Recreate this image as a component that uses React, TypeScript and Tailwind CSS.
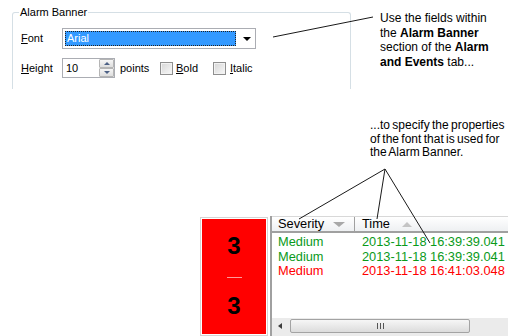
export default function App() {
  return (
    <div className="relative w-[530px] h-[336px] overflow-hidden bg-white text-black font-['Liberation_Sans',Arial,sans-serif]">
      {/* Dialog group box + first note */}
      <div className="flex h-[89px]">
        <fieldset className="ml-[12px] mt-[6px] w-[339px] h-[83px] shrink-0 rounded-t-[3px] border border-b-0 border-[#d5dfe5] px-[6px] text-[11px]">
          <legend className="px-[1px] leading-[13px]">Alarm Banner</legend>

          <div className="mt-[9px] ml-[2px] flex h-[21px] items-center">
            <span className="w-[41px]">
              <span className="underline">F</span>ont
            </span>
            <div className="flex h-[21px] w-[194px] items-center border border-[#abadb3] p-[2px]">
              <div className="h-full w-[171px] border border-dotted border-[#222] bg-[#3399ff] pl-[1px] leading-[13px] text-white">
                Arial
              </div>
              <div className="ml-[7px] h-0 w-0 border-x-[4px] border-t-[4px] border-x-transparent border-t-black" />
            </div>
          </div>

          <div className="mt-[9px] ml-[2px] flex h-[20px] items-center">
            <span className="w-[41px]">
              <span className="underline">H</span>eight
            </span>
            <div className="flex h-[20px] w-[53px] border border-[#abadb3]">
              <span className="w-[36px] pl-[3px] leading-[18px]">10</span>
              <div className="flex w-[15px] flex-col">
                <div className="flex h-[9px] items-center justify-center rounded-[1px] border border-[#b5b5b5] bg-gradient-to-b from-[#f6f6f6] to-[#dedede]">
                  <div className="h-0 w-0 border-x-[3px] border-b-[3px] border-x-transparent border-b-[#4d6185]" />
                </div>
                <div className="flex h-[9px] items-center justify-center rounded-[1px] border border-[#b5b5b5] bg-gradient-to-b from-[#f6f6f6] to-[#dedede]">
                  <div className="h-0 w-0 border-x-[3px] border-t-[3px] border-x-transparent border-t-[#4d6185]" />
                </div>
              </div>
            </div>
            <span className="ml-[5px] w-[40px]">points</span>
            <div className="size-[13px] border border-[#8f8f8f] bg-gradient-to-br from-[#d6d6d6] to-[#f8f8f8] shadow-[inset_0_0_0_1px_#f2f2f2]" />
            <span className="ml-[3px] w-[37px]">
              <span className="underline">B</span>old
            </span>
            <div className="size-[13px] border border-[#8f8f8f] bg-gradient-to-br from-[#d6d6d6] to-[#f8f8f8] shadow-[inset_0_0_0_1px_#f2f2f2]" />
            <span className="ml-[4px]">
              <span className="underline">I</span>talic
            </span>
          </div>
        </fieldset>

        <p className="ml-[29px] mt-[11px] text-[12px] leading-[14.67px]">
          Use the fields within
          <br />
          the <b>Alarm Banner</b>
          <br />
          section of the <b>Alarm</b>
          <br />
          <b>and Events</b> tab...
        </p>
      </div>

      {/* Second note */}
      <div className="h-[127px] pl-[370px] pt-[30px] text-[12px] leading-[13.5px] [word-spacing:-1px]">
        ...to specify the properties
        <br />
        of the font that is used for
        <br />
        the Alarm Banner.
      </div>

      {/* Alarm banner preview */}
      <div className="flex h-[120px] pl-[200px]">
        <div className="mt-[1px] h-[119px] w-[68px] border border-[#d4d4d4] p-[1px]">
          <div className="flex h-full flex-col items-center bg-[#ff0000] pt-[15px] text-[24px] font-bold leading-[24px]">
            <span>3</span>
            <div className="mt-[19px] h-[1px] w-[15px] bg-[#ff9a9a]" />
            <span className="mt-[16px]">3</span>
          </div>
        </div>

        <div className="ml-[2px] flex w-[238px] flex-col border-l-2 border-[#a0a0a0] text-[12.8px]">
          <div className="flex h-[17px] items-center border-t border-b-2 border-t-[#d8d8d8] border-b-[#a0a0a0] bg-gradient-to-b from-white to-[#eef0f2]">
            <div className="flex h-full w-[83px] items-center border-r border-[#a0a0a0] pl-[6px]">
              Severity
              <div className="ml-[9px] h-0 w-0 border-x-[6px] border-t-[5px] border-x-transparent border-t-[#a8a8a8]" />
            </div>
            <div className="flex items-center pl-[7px]">
              Time
              <div className="ml-[12px] h-0 w-0 border-x-[5px] border-b-[5px] border-x-transparent border-b-[#c4c4c4]" />
            </div>
          </div>

          <div className="flex-1 whitespace-nowrap pt-[2px] leading-[14.7px]">
            <div className="flex text-[#0a9a1a]">
              <span className="w-[83px] pl-[6px]">Medium</span>
              <span className="pl-[7px]">2013-11-18 16:39:39.041</span>
            </div>
            <div className="flex text-[#0a9a1a]">
              <span className="w-[83px] pl-[6px]">Medium</span>
              <span className="pl-[7px]">2013-11-18 16:39:39.041</span>
            </div>
            <div className="flex text-[#ff0000]">
              <span className="w-[83px] pl-[6px]">Medium</span>
              <span className="pl-[7px]">2013-11-18 16:41:03.048</span>
            </div>
          </div>

          <div className="flex h-[18px] items-start bg-[#ebebeb] pl-[6px] pt-[1px]">
            <div className="mt-[4px] h-0 w-0 border-y-[3px] border-r-[4px] border-y-transparent border-r-[#3c3c3c]" />
            <div className="ml-[8px] flex h-[14px] w-[180px] items-center justify-center gap-[2px] rounded-[2px] border border-[#a3a3a3] bg-gradient-to-b from-[#f6f6f6] to-[#dcdcdc]">
              <div className="h-[6px] w-[1px] bg-[#555]" />
              <div className="h-[6px] w-[1px] bg-[#555]" />
              <div className="h-[6px] w-[1px] bg-[#555]" />
            </div>
          </div>
        </div>
      </div>

      {/* Callout lines */}
      <svg className="pointer-events-none absolute left-0 top-0" width="530" height="336">
        <g stroke="#1a1a1a" strokeWidth="1" fill="none">
          <line x1="273" y1="37" x2="373" y2="17" />
          <line x1="385" y1="169" x2="299" y2="219" />
          <line x1="385" y1="169" x2="377" y2="219" />
          <line x1="385" y1="169" x2="430" y2="243" />
        </g>
      </svg>
    </div>
  )
}
